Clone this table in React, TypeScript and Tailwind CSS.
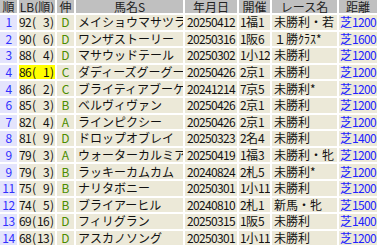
import React from 'react'

type Row = {
  rank: string
  lb: string
  lbColor?: string
  grow: string
  name: string
  date: string
  meet: string
  race: string
  dist: string
}

const rows: Row[] = [
  { rank: '1', lb: '92( 3)', lbColor: 'bg-[#00ff00]', grow: 'D', name: 'メイショウマサツラ', date: '20250412', meet: '1福1', race: '未勝利・若', dist: '芝1200' },
  { rank: '2', lb: '90( 6)', grow: 'D', name: 'ワンザストーリー', date: '20250316', meet: '1阪6', race: '１勝ｸﾗｽ*', dist: '芝1600' },
  { rank: '3', lb: '88( 4)', grow: 'D', name: 'マサウッドテール', date: '20250302', meet: '1小12', race: '未勝利', dist: '芝1200' },
  { rank: '4', lb: '86( 1)', lbColor: 'bg-[#ffff00]', grow: 'C', name: 'ダディーズグーグー', date: '20250426', meet: '2京1', race: '未勝利', dist: '芝1200' },
  { rank: '4', lb: '86( 2)', lbColor: 'bg-[#00ffff]', grow: 'C', name: 'ブライティアブーケ', date: '20241214', meet: '7京5', race: '未勝利*', dist: '芝1200' },
  { rank: '6', lb: '85( 3)', lbColor: 'bg-[#00ff00]', grow: 'B', name: 'ベルヴィヴァン', date: '20250426', meet: '2京1', race: '未勝利', dist: '芝1200' },
  { rank: '7', lb: '82( 4)', grow: 'A', name: 'ラインピクシー', date: '20250426', meet: '2京1', race: '未勝利', dist: '芝1200' },
  { rank: '8', lb: '81( 9)', grow: 'D', name: 'ドロップオブレイ', date: '20250323', meet: '2名4', race: '未勝利', dist: '芝1400' },
  { rank: '9', lb: '79( 3)', lbColor: 'bg-[#00ff00]', grow: 'A', name: 'ウォーターカルミア', date: '20250419', meet: '1福3', race: '未勝利・牝', dist: '芝1200' },
  { rank: '9', lb: '79( 3)', lbColor: 'bg-[#00ff00]', grow: 'B', name: 'ラッキーカムカム', date: '20240824', meet: '2札5', race: '未勝利*', dist: '芝1200' },
  { rank: '11', lb: '75( 9)', grow: 'B', name: 'ナリタボニー', date: '20250301', meet: '1小11', race: '未勝利', dist: '芝1200' },
  { rank: '12', lb: '74( 5)', grow: 'B', name: 'ブライアーヒル', date: '20240810', meet: '2札1', race: '新馬・牝', dist: '芝1500' },
  { rank: '13', lb: '69(16)', grow: 'D', name: 'フィリグラン', date: '20250315', meet: '1阪5', race: '未勝利', dist: '芝1400' },
  { rank: '14', lb: '68(13)', grow: 'D', name: 'アスカノソング', date: '20250301', meet: '1小11', race: '未勝利', dist: '芝1200' },
]

const headers = ['順', 'LB(順)', '伸', '馬名S', '年月日', '開催', 'レース名', '距離']

const cell = 'flex items-center overflow-hidden whitespace-nowrap bg-[#ece9d8] text-[#111] pl-[2px]'

// ascii chars get a fixed 6px pitch, like the half-width font of the original grid
function Mono({ text }: { text: string }) {
  return (
    <>
      {text.split('').map((c, i) =>
        c.charCodeAt(0) < 128 ? (
          <span key={i} className="inline-block w-[6px] shrink-0 text-center">
            {c === ' ' ? '\u00a0' : c}
          </span>
        ) : (
          <span key={i} className="shrink-0">{c}</span>
        ),
      )}
    </>
  )
}

export default function App() {
  return (
    <div
      className="w-[377px] h-[247px] overflow-hidden bg-white text-[12px] leading-none"
      style={{ fontFamily: '"Noto Sans CJK JP", "Liberation Sans", sans-serif' }}
    >
      <div className="grid w-[377px] grid-cols-[17px_36px_17px_107px_52px_31px_65px_38px] grid-rows-[13px_repeat(14,14.6px)] gap-[2px]">
        {headers.map((h) => (
          <div key={h} className="flex items-center justify-center overflow-hidden whitespace-nowrap bg-[#c0c0c0] text-[#222]">
            {h}
          </div>
        ))}
        {rows.map((r, i) => (
          <React.Fragment key={i}>
            <div className="flex items-center justify-center bg-[#e4e4fc] tracking-[-0.5px] text-[#3030ff]">{r.rank}</div>
            <div className={`${cell} ${r.lbColor ?? ''} !pl-0`}>
              <Mono text={r.lb} />
            </div>
            <div className="flex items-center justify-center bg-[#ece9d8] text-[#4a8c00]">{r.grow}</div>
            <div className={cell}>{r.name}</div>
            <div className={cell}>
              <Mono text={r.date} />
            </div>
            <div className={`${cell} !pl-[1px]`}>
              <Mono text={r.meet} />
            </div>
            <div className={cell}>{r.race}</div>
            <div className={`${cell} !pl-[1px] text-[#2020ff]`}>
              <Mono text={r.dist} />
            </div>
          </React.Fragment>
        ))}
      </div>
    </div>
  )
}
